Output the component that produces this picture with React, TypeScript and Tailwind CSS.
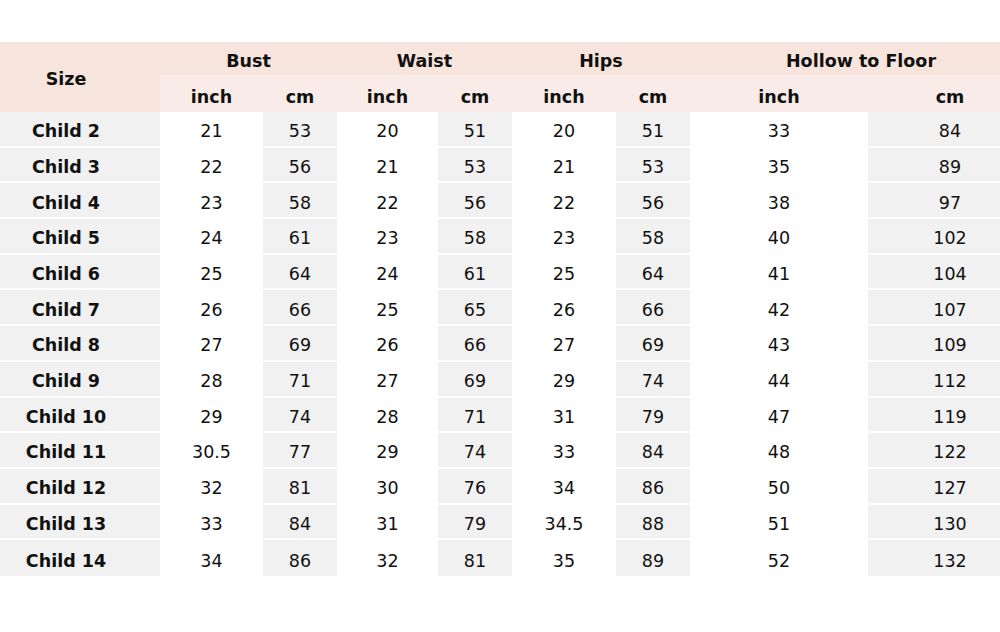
import React from "react";

const rows: string[][] = [
  ["Child 2", "21", "53", "20", "51", "20", "51", "33", "84"],
  ["Child 3", "22", "56", "21", "53", "21", "53", "35", "89"],
  ["Child 4", "23", "58", "22", "56", "22", "56", "38", "97"],
  ["Child 5", "24", "61", "23", "58", "23", "58", "40", "102"],
  ["Child 6", "25", "64", "24", "61", "25", "64", "41", "104"],
  ["Child 7", "26", "66", "25", "65", "26", "66", "42", "107"],
  ["Child 8", "27", "69", "26", "66", "27", "69", "43", "109"],
  ["Child 9", "28", "71", "27", "69", "29", "74", "44", "112"],
  ["Child 10", "29", "74", "28", "71", "31", "79", "47", "119"],
  ["Child 11", "30.5", "77", "29", "74", "33", "84", "48", "122"],
  ["Child 12", "32", "81", "30", "76", "34", "86", "50", "127"],
  ["Child 13", "33", "84", "31", "79", "34.5", "88", "51", "130"],
  ["Child 14", "34", "86", "32", "81", "35", "89", "52", "132"],
];

const cols = "grid-cols-[188px_103px_74px_101px_74px_104px_74px_178px_164px]";

export default function App() {
  return (
    <div
      className="w-[1000px] h-[632px] bg-white overflow-hidden text-[#111]"
      style={{ fontFamily: '"DejaVu Sans", Verdana, sans-serif' }}
    >
      <div className="ml-[-28px] mt-[42px] w-[1060px]">
        {/* header */}
        <div className={`grid ${cols} grid-rows-[35px_35px] text-[17.5px] font-bold`}>
          <div className="row-span-2 bg-[#f7e4dc] flex items-center justify-center pt-[5px]">Size</div>
          <div className="col-span-2 bg-[#f7e4dc] flex items-center justify-center pt-[5px] border-b-2 border-[#faeeea]">Bust</div>
          <div className="col-span-2 bg-[#f7e4dc] flex items-center justify-center pt-[5px] border-b-2 border-[#faeeea]">Waist</div>
          <div className="col-span-2 bg-[#f7e4dc] flex items-center justify-center pt-[5px] border-b-2 border-[#faeeea]">Hips</div>
          <div className="col-span-2 bg-[#f7e4dc] flex items-center justify-center pt-[5px] border-b-2 border-[#faeeea]">Hollow to Floor</div>
          {["inch", "cm", "inch", "cm", "inch", "cm", "inch", "cm"].map((t, i) => (
            <div key={i} className="bg-[#f9ece8] flex items-center justify-center pt-[5px]">
              {t}
            </div>
          ))}
        </div>
        {/* body */}
        <div className={`grid ${cols} grid-rows-[repeat(13,minmax(0,1fr))] h-[464px]`}>
          {rows.map((r, ri) =>
            r.map((v, ci) => {
              const gray = ci === 0 || ci % 2 === 0;
              const bold = ci === 0;
              return (
                <div
                  key={`${ri}-${ci}`}
                  className={`flex items-center justify-center pt-[5px] ${
                    gray ? "bg-[#f1f1f1]" : "bg-white"
                  } ${ri < rows.length - 1 ? "border-b-2 border-white" : ""} ${
                    bold ? "font-bold text-[17.5px]" : "text-[17.5px]"
                  }`}
                >
                  {v}
                </div>
              );
            })
          )}
        </div>
      </div>
    </div>
  );
}
